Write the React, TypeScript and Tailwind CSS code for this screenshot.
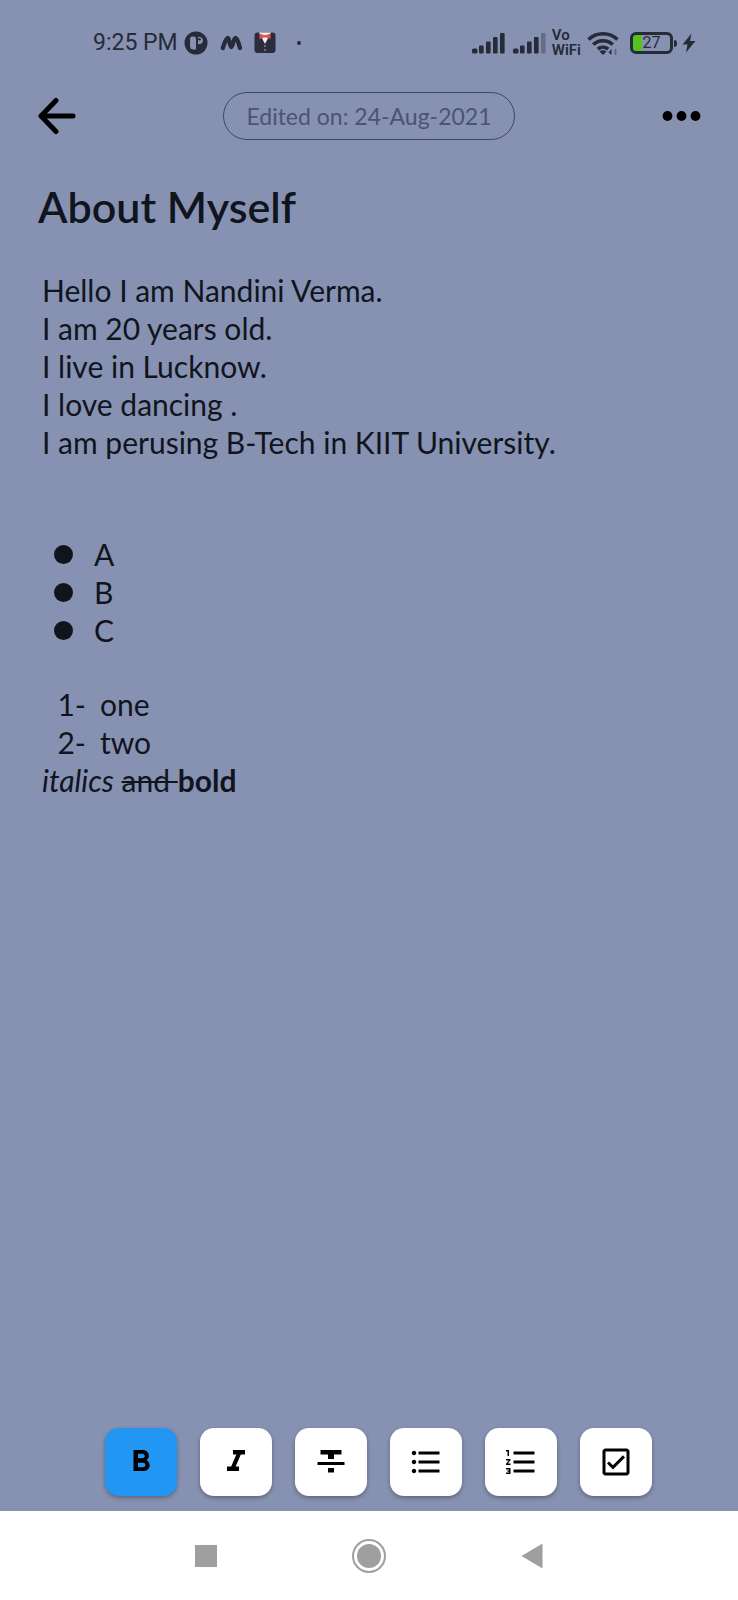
import type { ReactNode } from "react";
import {
  MdFormatBold,
  MdFormatItalic,
  MdFormatListBulleted,
  MdFormatListNumbered,
  MdFormatStrikethrough,
  MdOutlineCheckBox,
} from "react-icons/md";

function SignalBars({ faded = false }: { faded?: boolean }) {
  return (
    <svg width="33" height="22" viewBox="0 0 33 22" fill="#262b38" aria-hidden="true">
      <rect x="0" y="16.500" width="5.500" height="5" rx="1.500" />
      <rect x="7" y="13.500" width="4.600" height="8" rx="1" />
      <rect x="14" y="9.500" width="4.600" height="12" rx="1" />
      <rect x="21" y="5" width="4.600" height="16.500" rx="1" />
      <rect x="28" y="1" width="4.600" height="20.500" rx="1" opacity={faded ? 0.35 : 1} />
    </svg>
  );
}

function StatusBar() {
  return (
    <div className="flex h-[86px] items-center justify-between pr-[42px] pl-[93px] font-[Roboto,sans-serif] text-[#262b38]">
      <div className="flex items-center">
        <span className="text-[23px] leading-7">9:25 PM</span>
        <svg className="ml-[6px]" width="24" height="24" viewBox="0 0 24 24" aria-hidden="true">
          <circle cx="12" cy="12" r="11.500" fill="#262b38" />
          <path d="M8.500 5.500H10a2 2 0 0 1 2 2v11H9.500A3.500 3.500 0 0 1 6 15V8a2.500 2.500 0 0 1 2.500-2.500z" fill="#8791b2" />
          <path d="M14 5.800q5 .2 5 3.700T14 13.200z" fill="#8791b2" />
          <circle cx="15.500" cy="8.300" r="1.300" fill="#262b38" />
        </svg>
        <svg className="ml-3" width="23" height="18" viewBox="0 0 23 18" aria-hidden="true">
          <path
            d="M2.800 14Q6 4 7.800 4C9.500 4 9.800 13 11.300 13S13.500 4 15.500 4Q17.500 4 20 14"
            fill="none"
            stroke="#262b38"
            strokeWidth="4.300"
            strokeLinecap="round"
            strokeLinejoin="round"
          />
        </svg>
        <svg className="ml-[11px]" width="22" height="22" viewBox="0 0 22 22" aria-hidden="true">
          <rect x="0.500" y="0.500" width="21" height="20.500" rx="3" fill="#2c2c3c" />
          <path d="M5 0.500h12l-6 11.500z" fill="#f4f1f4" />
          <path d="M5.500 1.500 10 3h2l4.500-1.500v5.500L12 5.500h-2L5.500 7z" fill="#e5534f" />
          <path d="M11 13v7" stroke="#a9abc0" strokeWidth="1" strokeDasharray="2 2" />
        </svg>
        <span className="ml-[21px] size-1 rounded-full bg-[#262b38]" />
      </div>
      <div className="flex items-center">
        <SignalBars />
        <span className="w-2" />
        <SignalBars faded />
        <span className="ml-[6px] flex flex-col text-[15px] leading-[15px] font-semibold">
          <span>Vo</span>
          <span>WiFi</span>
        </span>
        <svg className="ml-[6px]" width="33" height="25" viewBox="0 0 33 25" aria-hidden="true">
          <g fill="none" stroke="#262b38" strokeWidth="3.600">
            <path d="M1.500 8.500a21 21 0 0 1 29 0" />
            <path d="M6.200 13.500a14.500 14.500 0 0 1 19.600 0" />
            <path d="M10.800 18.200a8 8 0 0 1 10.400 0" />
          </g>
          <path d="M12.500 20.500q3.500-2.500 7 0L16 24z" fill="#262b38" />
          <path d="M21.500 21.500l3 2.500v-6z" fill="#262b38" />
          <path d="M28.500 18v6" stroke="#5c6480" strokeWidth="1.800" />
        </svg>
        <span className="ml-[10px] flex h-[22px] w-[43px] items-center justify-center rounded-[6px] border-[3px] border-[#262b38] bg-linear-to-r from-[#55c31f] from-25% to-transparent to-25% text-[16px] leading-4">
          27
        </span>
        <span className="ml-px h-[7px] w-[3px] rounded-r-sm bg-[#262b38]" />
        <svg className="ml-[5px]" width="14" height="20" viewBox="0 0 14 20" fill="#262b38" aria-hidden="true">
          <path d="M9.500 0.500 0.500 11.500h5L4 19.500l9.500-11.500H8z" />
        </svg>
      </div>
    </div>
  );
}

function ToolButton({ label, active = false, children }: { label: string; active?: boolean; children: ReactNode }) {
  return (
    <button
      type="button"
      aria-label={label}
      aria-pressed={active}
      className={`flex h-[68px] w-[72px] items-center justify-center rounded-[14px] text-[36px] text-black shadow-[0_2px_4px_rgba(0,0,0,0.3)] ${
        active ? "bg-[#2196f3]" : "bg-white"
      }`}
    >
      {children}
    </button>
  );
}

export default function App() {
  return (
    <div className="flex min-h-screen flex-col bg-[#8791b2] font-[Lato,sans-serif] text-[#10151d]">
      <StatusBar />

      <header className="flex h-[60px] items-center justify-between px-[37px]">
        <button type="button" aria-label="Back" className="w-10">
          <svg width="40" height="38" viewBox="0 0 40 38" fill="none" stroke="#000" strokeWidth="5" strokeLinecap="round" strokeLinejoin="round" aria-hidden="true">
            <path d="M36 19H4M19 3.500 4 19l15 15.500" />
          </svg>
        </button>
        <div className="flex h-12 items-center rounded-full border border-[#3f4763] px-[22px] text-[23px] leading-7 text-[#4c5470]">
          Edited on: 24-Aug-2021
        </div>
        <button type="button" aria-label="More options" className="w-10">
          <svg width="40" height="12" viewBox="0 0 40 12" aria-hidden="true">
            <circle cx="6.500" cy="6" r="4.900" />
            <circle cx="20.500" cy="6" r="4.900" />
            <circle cx="34.500" cy="6" r="4.900" />
          </svg>
        </button>
      </header>

      <main className="flex-1 px-[38px] pt-[37px]">
        <h1 className="text-[43px] leading-12 font-semibold">About Myself</h1>
        <div className="mt-10 pl-1 text-[30px] leading-[38px]">
          <p>Hello I am Nandini Verma.</p>
          <p>I am 20 years old.</p>
          <p>I live in Lucknow.</p>
          <p>I love dancing .</p>
          <p>I am perusing B-Tech in KIIT University.</p>
          <ul className="mt-[74px] pl-3">
            {["A", "B", "C"].map((item) => (
              <li key={item} className="flex items-center gap-[21px]">
                <span className="size-[19px] rounded-full bg-[#10151d]" />
                {item}
              </li>
            ))}
          </ul>
          <ol className="mt-9">
            {["one", "two"].map((item, index) => (
              <li key={item} className="flex gap-[14px]">
                <span className="w-11 text-right">{index + 1}-</span>
                {item}
              </li>
            ))}
          </ol>
          <p>
            <em>italics</em> <s className="decoration-2">and </s>
            <strong>bold</strong>
          </p>
        </div>
      </main>

      <div role="toolbar" aria-label="Formatting" className="flex justify-center gap-[23px] pb-[15px] pl-[18px]">
        <ToolButton label="Bold" active>
          <MdFormatBold />
        </ToolButton>
        <ToolButton label="Italic">
          <MdFormatItalic />
        </ToolButton>
        <ToolButton label="Strikethrough">
          <MdFormatStrikethrough />
        </ToolButton>
        <ToolButton label="Bulleted list">
          <MdFormatListBulleted />
        </ToolButton>
        <ToolButton label="Numbered list">
          <MdFormatListNumbered />
        </ToolButton>
        <ToolButton label="Checklist">
          <MdOutlineCheckBox />
        </ToolButton>
      </div>

      <nav aria-label="System" className="flex h-[89px] items-center justify-center gap-[129px] bg-white">
        <button type="button" aria-label="Recent apps" className="flex w-[34px] justify-center">
          <span className="size-[22px] bg-[#9f9f9f]" />
        </button>
        <button type="button" aria-label="Home" className="flex size-[34px] items-center justify-center rounded-full border-2 border-[#9f9f9f]">
          <span className="size-6 rounded-full bg-[#9f9f9f]" />
        </button>
        <button type="button" aria-label="Back" className="flex w-[34px] justify-center">
          <svg width="22" height="26" viewBox="0 0 22 26" fill="#9f9f9f" aria-hidden="true">
            <path d="M21.500 0.500v25L0.500 13z" />
          </svg>
        </button>
      </nav>
    </div>
  );
}
